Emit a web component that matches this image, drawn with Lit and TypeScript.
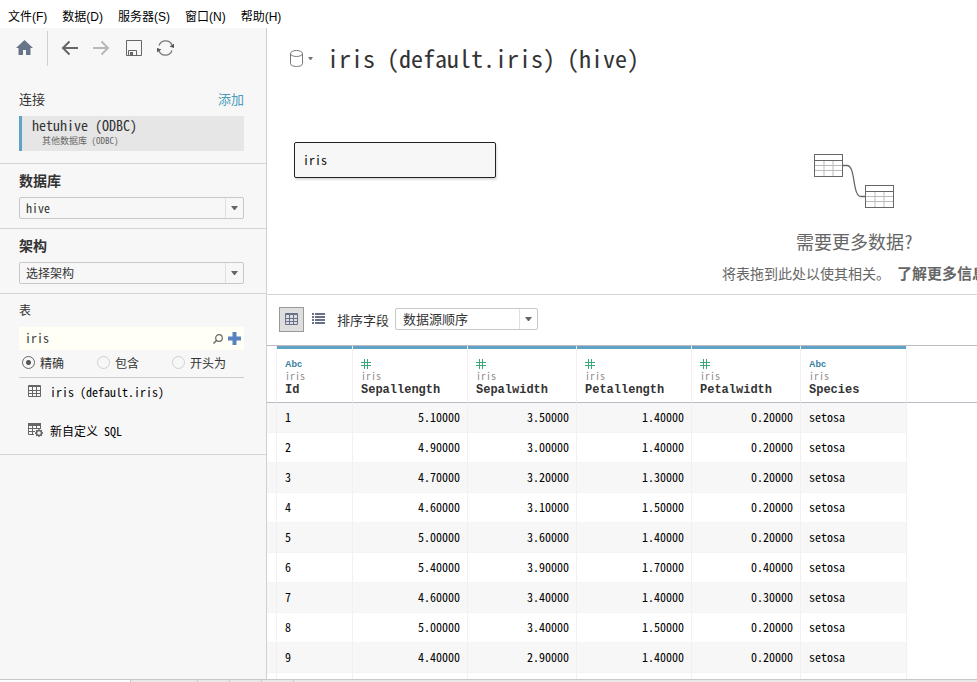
import { LitElement, html, css, svg } from "lit";
import { customElement, state } from "lit/decorators.js";
import { classMap } from "lit/directives/class-map.js";

interface Column {
  name: string;
  kind: "text" | "number";
  width: string;
}

const COLUMNS: Column[] = [
  { name: "Id", kind: "text", width: "c76" },
  { name: "Sepallength", kind: "number", width: "c115" },
  { name: "Sepalwidth", kind: "number", width: "c109" },
  { name: "Petallength", kind: "number", width: "c115" },
  { name: "Petalwidth", kind: "number", width: "c109" },
  { name: "Species", kind: "text", width: "c106" },
];

const ROWS: string[][] = [
  ["1", "5.10000", "3.50000", "1.40000", "0.20000", "setosa"],
  ["2", "4.90000", "3.00000", "1.40000", "0.20000", "setosa"],
  ["3", "4.70000", "3.20000", "1.30000", "0.20000", "setosa"],
  ["4", "4.60000", "3.10000", "1.50000", "0.20000", "setosa"],
  ["5", "5.00000", "3.60000", "1.40000", "0.20000", "setosa"],
  ["6", "5.40000", "3.90000", "1.70000", "0.40000", "setosa"],
  ["7", "4.60000", "3.40000", "1.40000", "0.30000", "setosa"],
  ["8", "5.00000", "3.40000", "1.50000", "0.20000", "setosa"],
  ["9", "4.40000", "2.90000", "1.40000", "0.20000", "setosa"],
];

const base = css`
  * {
    box-sizing: border-box;
  }
  svg {
    display: block;
    flex: none;
  }
  h1,
  h2,
  p,
  ul {
    margin: 0;
    padding: 0;
  }
  button,
  input,
  select {
    font: inherit;
    font-feature-settings: inherit;
    color: inherit;
    margin: 0;
  }
  button {
    padding: 0;
    border: 0;
    background: none;
  }
  a {
    color: inherit;
    text-decoration: none;
  }
  .picker {
    display: grid;
    grid-template-columns: 1fr 18px;
    height: 22px;
    border: 1px solid #c8c8c8;
    border-radius: 2px;
  }
  .picker select {
    grid-area: 1 / 1 / 2 / 3;
    appearance: none;
    width: 100%;
    height: 20px;
    padding: 0 24px 0 6px;
    border: 0;
    background: none;
    line-height: 20px;
    outline: none;
  }
  .picker .drop {
    grid-area: 1 / 2;
    display: grid;
    place-items: center;
    border-left: 1px solid #e0e0e0;
    pointer-events: none;
  }
`;

const caret = html`<svg width="7" height="4" viewBox="0 0 7 4"><path d="M0 0h7L4 4H3z" fill="#666" /></svg>`;

const gridIcon = (color: string) => html`<svg width="13" height="12" viewBox="0 0 13 12" fill="none" stroke=${color}>
  <path d="M.5 .5h12v11H.5zM0 1.5h13M1 5.5h11M1 8.5h11M4.5 1v10M8.5 1v10" />
</svg>`;

@customElement("connection-pane")
export class ConnectionPane extends LitElement {
  static styles = [
    base,
    css`
      :host {
        display: block;
        background: #f7f7f7;
        border-right: 1px solid #d0d0d0;
        color: #333;
        overflow: hidden;
      }
      .tools {
        display: flex;
        align-items: center;
        height: 40px;
        padding-left: 16px;
      }
      .tools .rule {
        width: 1px;
        height: 35px;
        margin: 0 13px 0 14px;
        background: #d0d0d0;
      }
      .tools .set {
        display: flex;
        gap: 15px;
      }
      section {
        padding: 0 22px 0 19px;
        border-bottom: 1px solid #d4d4d4;
      }
      .links {
        padding-top: 21px;
        padding-bottom: 12px;
      }
      .head {
        display: flex;
        justify-content: space-between;
        height: 27px;
        font-size: 13px;
        line-height: 20px;
      }
      h2 {
        font-size: 13px;
        font-weight: 400;
      }
      .head a {
        color: #4a9aba;
      }
      .source {
        display: flex;
        flex-direction: column;
        justify-content: flex-start;
        width: 100%;
        height: 35px;
        padding-left: 10px;
        border-left: 3px solid #5fa4c4;
        background: #e6e6e6;
        text-align: left;
      }
      .source .name {
        font-size: 14px;
        line-height: 18px;
      }
      .source .driver {
        padding-left: 10px;
        font-size: 9px;
        line-height: 14px;
        color: #666;
      }
      .field {
        height: 65px;
        padding-top: 6px;
      }
      .field label {
        display: block;
        height: 27px;
        font-size: 14px;
        font-weight: 700;
        line-height: 20px;
      }
      .tables {
        padding-top: 6px;
        padding-bottom: 8px;
      }
      .tables h2 {
        height: 27px;
        font-size: 12px;
        line-height: 20px;
      }
      .search {
        display: flex;
        align-items: center;
        gap: 5px;
        height: 23px;
        padding-right: 3px;
        background: #fffff5;
      }
      .search input {
        flex: 1;
        min-width: 0;
        height: 22px;
        padding: 0 0 2px 6px;
        border: 0;
        background: none;
        outline: none;
      }
      .modes {
        display: grid;
        grid-template-columns: repeat(3, 75px);
        height: 28px;
        padding: 0 0 2px 3px;
        border-bottom: 1px solid #ccc;
      }
      .modes label {
        display: flex;
        align-items: center;
        gap: 5px;
        white-space: nowrap;
      }
      .modes input {
        appearance: none;
        width: 13px;
        height: 13px;
        border: 1px solid #d0d0d0;
        border-radius: 50%;
      }
      .modes input:checked {
        border-color: #666;
        background: radial-gradient(circle, #555 2px, transparent 3px);
      }
      ul {
        list-style: none;
      }
      li {
        height: 39px;
      }
      li:last-child {
        height: 29px;
      }
      li button {
        display: grid;
        grid-template-columns: 15px auto;
        align-items: center;
        gap: 7px;
        height: 26px;
        padding-left: 9px;
        color: #000;
      }
    `,
  ];

  render() {
    return html`
      <div class="tools">
        <button aria-label="开始">
          <svg width="17" height="16" viewBox="0 0 17 16">
            <path d="M8.500 0L17 8h-2.500v7H10v-5H7v5H2.500V8H0z" fill="#66758a" />
          </svg>
        </button>
        <span class="rule"></span>
        <div class="set">
          <button aria-label="撤消">
            <svg width="17" height="16" viewBox="0 0 17 16" fill="none" stroke="#666" stroke-width="2">
              <path d="M1.500 8H17M8.500 1.500L2 8l6.500 6.500" />
            </svg>
          </button>
          <button aria-label="重做">
            <svg width="17" height="16" viewBox="0 0 17 16" fill="none" stroke="#b8b8b8" stroke-width="2">
              <path d="M0 8h15.500M8.500 1.500L15 8l-6.500 6.500" />
            </svg>
          </button>
          <button aria-label="保存">
            <svg width="17" height="16" viewBox="0 0 17 16" fill="none" stroke="#666">
              <path d="M1.500 .5h15v15h-15zM3.500 15v-4.500h8V15" />
              <path d="M5 12h3v3H5z" fill="#666" stroke="none" />
            </svg>
          </button>
          <button aria-label="刷新">
            <svg width="17" height="16" viewBox="0 0 17 16" fill="none" stroke="#777" stroke-width="1.200">
              <path d="M2 5.500A7 7 0 0 1 15.200 5.500M15 10.500A7 7 0 0 1 1.800 10.500" />
              <path d="M17 3.800v4.200l-4.500-1.500zM0 12.200V8l4.500 1.500z" fill="#555" stroke="none" />
            </svg>
          </button>
        </div>
      </div>

      <section class="links">
        <div class="head">
          <h2>连接</h2>
          <a href="#add">添加</a>
        </div>
        <button class="source">
          <span class="name">hetuhive (ODBC)</span>
          <span class="driver">其他数据库 (ODBC)</span>
        </button>
      </section>

      <section class="field">
        <label for="database">数据库</label>
        <div class="picker">
          <select id="database"><option>hive</option></select>
          <span class="drop">${caret}</span>
        </div>
      </section>

      <section class="field">
        <label for="schema">架构</label>
        <div class="picker">
          <select id="schema"><option>选择架构</option></select>
          <span class="drop">${caret}</span>
        </div>
      </section>

      <section class="tables">
        <h2 id="tables-title">表</h2>
        <div class="search">
          <input type="text" aria-labelledby="tables-title" .value=${"iris"} />
          <svg width="10" height="10" viewBox="0 0 10 10" fill="none" stroke="#666">
            <circle cx="6" cy="4" r="3.300" stroke-width="1.200" />
            <path d="M3.500 6.500L.5 9.500" stroke-width="1.400" />
          </svg>
          <button aria-label="添加筛选器">
            <svg width="13" height="13" viewBox="0 0 13 13">
              <path d="M4.500 0h4v4.500H13v4H8.500V13h-4V8.500H0v-4h4.500z" fill="#5a82c0" />
            </svg>
          </button>
        </div>
        <div class="modes" role="radiogroup" aria-labelledby="tables-title">
          <label><input type="radio" name="mode" checked />精确</label>
          <label><input type="radio" name="mode" />包含</label>
          <label><input type="radio" name="mode" />开头为</label>
        </div>
        <ul>
          <li><button>${gridIcon("#666")}<span>iris (default.iris)</span></button></li>
          <li>
            <button>
              <svg width="15" height="14" viewBox="0 0 15 14" fill="none" stroke="#666">
                <path d="M0 1.500h13" stroke-width="3" />
                <path d="M.5 2v9.500H6M1 5.500h12M1 8.500h6M4.500 3v9M8.500 3v3M12.500 3v3" />
                <circle cx="11" cy="10" r="2.500" stroke-width="1.500" />
                <path
                  d="M11 6v1.500M11 12.500V14M7 10h1.500M13.500 10H15M8.200 7.200l1 1M12.800 11.800l1 1M13.800 7.200l-1 1M9.200 11.800l-1 1"
                  stroke-width="1.300"
                />
              </svg>
              <span>新自定义 SQL</span>
            </button>
          </li>
        </ul>
      </section>
    `;
  }
}

@customElement("join-canvas")
export class JoinCanvas extends LitElement {
  static styles = [
    base,
    css`
      :host {
        display: block;
        height: 267px;
        border-bottom: 1px solid #d4d4d4;
        overflow: hidden;
      }
      .title {
        display: flex;
        align-items: center;
        height: 60px;
        padding-left: 23px;
      }
      .title button {
        display: flex;
        align-items: center;
        gap: 5px;
        margin-right: 14px;
      }
      h1 {
        font-size: 24px;
        font-weight: 400;
        line-height: 32px;
        color: #333;
        white-space: nowrap;
      }
      .board {
        display: flex;
        justify-content: space-between;
        align-items: flex-start;
        padding: 54px 0 0 27px;
      }
      .node {
        width: 202px;
        height: 36px;
        padding: 0 0 2px 8px;
        border: 1px solid #222;
        border-radius: 2px;
        background: #f7f7f7;
        box-shadow: 1px 2px 2px #ddd;
        color: #000;
        text-align: left;
      }
      .more {
        flex: none;
        display: grid;
        justify-items: center;
        margin-right: -10px;
        padding-top: 12px;
        color: #666;
        white-space: nowrap;
      }
      .more h2 {
        margin-top: 18px;
        font-size: 18px;
        font-weight: 400;
        line-height: 28px;
      }
      .more p {
        margin-top: 6px;
        font-size: 14px;
        line-height: 24px;
      }
      .more a {
        margin-left: 7px;
        font-size: 15px;
        font-weight: 700;
      }
    `,
  ];

  private sheet(x: number, y: number) {
    return svg`
      <rect x=${x + 0.5} y=${y + 0.5} width="28" height="22" fill="#fff" stroke="#666" />
      <path d=${`M${x + 1} ${y + 11.5}h27M${x + 1} ${y + 16.5}h27M${x + 10} ${y + 7}v15M${x + 19} ${y + 7}v15`} stroke="#bbb" />
      <path d=${`M${x} ${y + 6.5}h29`} stroke="#666" />`;
  }

  render() {
    return html`
      <div class="title">
        <button aria-label="数据源选项">
          <svg width="13" height="17" viewBox="0 0 13 17" fill="none" stroke="#777">
            <ellipse cx="6.500" cy="3.500" rx="6" ry="3" />
            <path d="M.5 3.500v10c0 4 12 4 12 0v-10" />
          </svg>
          <svg width="5" height="3" viewBox="0 0 5 3"><path d="M0 0h5L3 3H2z" fill="#777" /></svg>
        </button>
        <h1>iris (default.iris) (hive)</h1>
      </div>
      <div class="board">
        <button class="node">iris</button>
        <div class="more">
          <svg width="81" height="55" viewBox="0 0 81 55" fill="none">
            ${this.sheet(0, 0)}
            <path d="M29 11.500h4c9 0 5 31 14 31h4" stroke="#666" stroke-width="1.300" />
            ${this.sheet(51, 31)}
          </svg>
          <h2>需要更多数据?</h2>
          <p>将表拖到此处以使其相关。<a href="#more">了解更多信息</a></p>
        </div>
      </div>
    `;
  }
}

@customElement("data-grid")
export class DataGrid extends LitElement {
  @state() private view: "grid" | "list" = "grid";

  static styles = [
    base,
    css`
      :host {
        display: flex;
        flex-direction: column;
        min-height: 0;
        overflow: hidden;
      }
      .bar {
        display: flex;
        align-items: center;
        flex: none;
        height: 51px;
        padding: 0 0 2px 12px;
        border-bottom: 1px solid #bcbcc0;
        font-size: 13px;
        color: #333;
      }
      .bar .view {
        display: grid;
        place-items: center;
        width: 25px;
        height: 25px;
        border: 1px solid transparent;
      }
      .bar .view.on {
        border-color: #999;
        background: #dedede;
      }
      .bar .views {
        display: flex;
        gap: 2px;
        margin-right: 6px;
      }
      .bar .picker {
        width: 143px;
        margin-left: 6px;
      }
      .bar .picker select {
        padding-left: 7px;
      }
      table {
        width: 100%;
        table-layout: fixed;
        border-collapse: separate;
        border-spacing: 0;
        color: #000;
      }
      .c10 {
        width: 10px;
      }
      .c76 {
        width: 76px;
      }
      .c106 {
        width: 106px;
      }
      .c109 {
        width: 109px;
      }
      .c115 {
        width: 115px;
      }
      th {
        height: 57px;
        padding: 0;
        border-bottom: 1px solid #bcbac4;
        text-align: left;
        vertical-align: top;
      }
      th.edge,
      td.edge,
      th.field,
      td.field {
        border-right: 1px solid #f5eff1;
      }
      .cap {
        height: 56px;
        padding: 8px 0 0 8px;
        border-top: 3px solid #5fa4c4;
      }
      .kind {
        display: flex;
        align-items: center;
        height: 13px;
        font: 700 9px "Liberation Sans", sans-serif;
        color: #37809e;
      }
      .origin {
        display: block;
        font-size: 10px;
        font-weight: 400;
        line-height: 12px;
        color: #8a8a8a;
      }
      .name {
        display: block;
        font: 700 12px/16px "Liberation Mono", monospace;
        color: #333;
      }
      td {
        height: 30px;
        padding: 0 7px 2px 8px;
        line-height: 20px;
      }
      td.field,
      td.edge {
        border-bottom: 1px solid #f7f3f4;
      }
      td.number {
        text-align: right;
      }
      tr:nth-child(odd) td.field,
      tr:nth-child(odd) td.edge {
        background: #f7f7f7;
      }
    `,
  ];

  render() {
    return html`
      <div class="bar">
        <div class="views">
          <button
            class=${classMap({ view: true, on: this.view === "grid" })}
            aria-label="预览数据源"
            @click=${() => (this.view = "grid")}
          >
            ${gridIcon("#69708a")}
          </button>
          <button
            class=${classMap({ view: true, on: this.view === "list" })}
            aria-label="管理元数据"
            @click=${() => (this.view = "list")}
          >
            <svg width="13" height="12" viewBox="0 0 13 12" fill="#69708a">
              <path d="M0 0h2v2H0zM3 0h10v2H3zM0 3h2v2H0zM3 3h10v2H3zM0 6h2v2H0zM3 6h10v2H3zM0 9h2v2H0zM3 9h10v2H3z" />
            </svg>
          </button>
        </div>
        <label for="order">排序字段</label>
        <div class="picker">
          <select id="order"><option>数据源顺序</option></select>
          <span class="drop">${caret}</span>
        </div>
      </div>
      <table>
        <colgroup>
          <col class="c10" />
          ${COLUMNS.map((c) => html`<col class=${c.width} />`)}
          <col />
        </colgroup>
        <thead>
          <tr>
            <th class="edge"></th>
            ${COLUMNS.map(
              (c) => html`<th class="field" scope="col">
                <div class="cap">
                  <span class="kind">
                    ${c.kind === "text"
                      ? "Abc"
                      : html`<svg width="10" height="10" viewBox="0 0 10 10" fill="none" stroke="#3aa876">
                          <path d="M3.500 0v10M6.500 0v10M0 3.500h10M0 6.500h10" />
                        </svg>`}
                  </span>
                  <span class="origin">iris</span>
                  <span class="name">${c.name}</span>
                </div>
              </th>`,
            )}
            <th></th>
          </tr>
        </thead>
        <tbody>
          ${[...ROWS, COLUMNS.map(() => "")].map(
            (row) => html`<tr>
              <td class="edge"></td>
              ${row.map((v, i) => html`<td class="field ${COLUMNS[i].kind}">${v}</td>`)}
              <td></td>
            </tr>`,
          )}
        </tbody>
      </table>
    `;
  }
}

@customElement("app-root")
export class AppRoot extends LitElement {
  static styles = [
    base,
    css`
      :host {
        display: grid;
        grid-template-rows: 28px minmax(0, 1fr) 3px;
        height: 100vh;
        background: #fff;
        font-family: "Noto Sans CJK SC", sans-serif;
        font-size: 12px;
        font-feature-settings: "hwid";
        overflow: hidden;
      }
      nav {
        display: flex;
        align-items: center;
        gap: 15px;
        padding: 5px 0 0 8px;
      }
      nav button {
        font-family: "Liberation Sans", "Noto Sans CJK SC", sans-serif;
        line-height: 20px;
        color: #000;
        white-space: nowrap;
      }
      .body {
        display: grid;
        grid-template-columns: 267px minmax(0, 1fr);
        min-height: 0;
      }
      main {
        display: grid;
        grid-template-rows: auto minmax(0, 1fr);
        min-width: 0;
        min-height: 0;
      }
      .tabs {
        display: flex;
        border-top: 1px solid #c8c8c8;
        background: #e8e8e8;
      }
      .tabs span {
        width: 32px;
        border-right: 1px solid #c8c8c8;
      }
      .tabs .current {
        width: 131px;
        background: #fff;
      }
      .tabs .sheet {
        width: 67px;
      }
    `,
  ];

  render() {
    return html`
      <nav>
        ${["文件(F)", "数据(D)", "服务器(S)", "窗口(N)", "帮助(H)"].map((m) => html`<button>${m}</button>`)}
      </nav>
      <div class="body">
        <connection-pane></connection-pane>
        <main>
          <join-canvas></join-canvas>
          <data-grid></data-grid>
        </main>
      </div>
      <div class="tabs">
        <span class="current"></span><span class="sheet"></span><span></span><span></span><span></span>
      </div>
    `;
  }
}
